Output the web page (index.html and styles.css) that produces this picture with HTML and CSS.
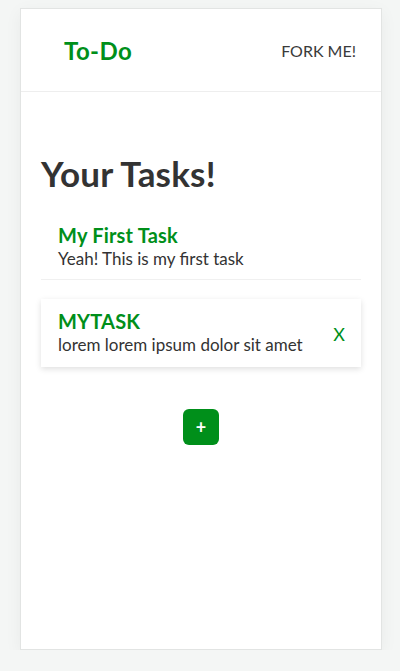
FILE: index.html
```html
<!DOCTYPE html>
<html>
<head>
<meta charset="utf-8">
<link rel="stylesheet" href="styles.css">
</head>
<body>
<div class="app">
  <header class="topbar">
    <div class="brand">To-Do</div>
    <a class="fork">FORK ME!</a>
  </header>
  <main class="content">
    <h1 class="heading">Your Tasks!</h1>
    <div class="task task-plain">
      <div class="task-text">
        <div class="task-title">My First Task</div>
        <div class="task-desc">Yeah! This is my first task</div>
      </div>
    </div>
    <div class="task task-card">
      <div class="task-text">
        <div class="task-title">MYTASK</div>
        <div class="task-desc">lorem lorem ipsum dolor sit amet</div>
      </div>
      <div class="remove">X</div>
    </div>
    <div class="add-row">
      <button class="add">+</button>
    </div>
  </main>
</div>
</body>
</html>
```
FILE: styles.css
```css
html, body {
  margin: 0;
  padding: 0;
}
body {
  background: #f4f6f5;
  font-family: Lato, "Open Sans", sans-serif;
  color: #333;
}
.app {
  box-sizing: border-box;
  margin: 8px 0 0 20px;
  width: 362px;
  height: 642px;
  background: #fff;
  border: 1px solid #e2e4e3;
  box-shadow: 0 4px 16px rgba(0,0,0,0.05);
}
.topbar {
  height: 82px;
  border-bottom: 1px solid #eeeeee;
  display: flex;
  align-items: center;
  justify-content: space-between;
  padding: 0 25px 0 43px;
}
.brand {
  color: #008f1a;
  font-weight: 700;
  font-size: 24px;
  letter-spacing: 0.4px;
}
.fork {
  font-size: 16px;
  color: #3a3a3a;
}
.content {
  padding: 0 20px;
}
.heading {
  margin: 60px 0 20px 0;
  font-size: 35px;
  font-weight: 700;
  color: #333;
  line-height: 42px;
  letter-spacing: 0.2px;
}
.task {
  display: flex;
  align-items: center;
  justify-content: space-between;
  padding: 0 16px 0 17px;
}
.task-plain {
  height: 66px;
  border-bottom: 1px solid #f0f0f0;
  padding-top: 2px;
  box-sizing: border-box;
}
.task-card {
  margin-top: 19px;
  height: 68px;
  padding-top: 2px;
  box-sizing: border-box;
  box-shadow: 0 2px 6px rgba(0,0,0,0.13);
}
.task-title {
  color: #008f1a;
  font-weight: 700;
  font-size: 20px;
  line-height: 22px;
  letter-spacing: 0.2px;
}
.task-desc {
  font-size: 17px;
  line-height: 26px;
  color: #333;
}
.remove {
  color: #008f1a;
  font-size: 18px;
}
.add-row {
  display: flex;
  justify-content: center;
  margin-top: 42px;
}
.add {
  width: 36px;
  height: 36px;
  border: none;
  border-radius: 6px;
  background: #008f1a;
  color: #fff;
  font-family: Lato, sans-serif;
  font-weight: 700;
  font-size: 18px;
  padding: 0;
}
```
